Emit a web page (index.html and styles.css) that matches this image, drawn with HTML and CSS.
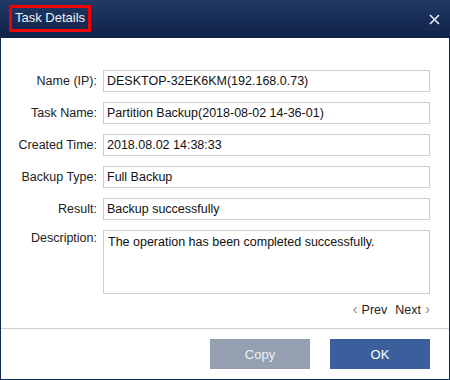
FILE: index.html
```html
<!DOCTYPE html>
<html>
<head>
    <meta name="viewport" content="width=device-width, initial-scale=1.0">
<link rel="stylesheet" href="styles.css">
</head>
<body>

<div class='dialog'>
  <div class='titlebar'>
    <span class='title'>Task Details</span>
    <svg class='close' width="11" height="11" viewBox="0 0 11 11"><path d="M1 1L10 10M10 1L1 10" stroke="#e4e9f2" stroke-width="1.6" fill="none"/></svg>
  </div>

  <div class='content'>
    <div class='form'>
      <div class='label'>Name (IP):</div>
      <div class='field'>DESKTOP-32EK6KM(192.168.0.73)</div>

      <div class='label'>Task Name:</div>
      <div class='field'>Partition Backup(2018-08-02 14-36-01)</div>

      <div class='label'>Created Time:</div>
      <div class='field'>2018.08.02 14:38:33</div>

      <div class='label'>Backup Type:</div>
      <div class='field'>Full Backup</div>

      <div class='label'>Result:</div>
      <div class='field'>Backup successfully</div>

      <div class='label top'>Description:</div>
      <div class='field area'>The operation has been completed successfully.</div>
    </div>

    <div class='pager'>
      <span class='chev'>&lsaquo;</span><span>Prev</span>
      <span class='next'>Next</span><span class='chev'>&rsaquo;</span>
    </div>
  </div>

  <div class='footer'>
    <button class='btn copy'>Copy</button>
    <button class='btn ok'>OK</button>
  </div>
</div>

</body>
</html>
```

FILE: styles.css
```css
* {box-sizing: border-box;}
body {margin: 0; background: #fff; font-family: "Liberation Sans", Arial, sans-serif; font-size: 12.5px;}

.dialog {width: 450px; height: 380px; border: 1px solid #132a50; border-top: 0; display: flex; flex-direction: column; background: #fff;}

.titlebar {height: 38px; margin: 0 -1px; background: linear-gradient(#213a66, #0f2148); display: flex; align-items: center; justify-content: space-between; padding: 0 10px 0 9px;}
.title {color: #eef2f8; font-size: 13px; border: 3px solid #f00000; padding: 3px 3px 4px 3px; margin-top: -1px; line-height: 14px;}
.close {margin-top: 1px;}

.content {flex: 1; padding: 32px 19px 0 0;}
.form {display: grid; grid-template-columns: 96px 327px; column-gap: 6px; row-gap: 10px;}
.label {color: #222; text-align: right; line-height: 22px; white-space: nowrap;}
.label.top {line-height: 16px;}
.field {height: 22px; border: 1px solid #cdcdcd; line-height: 20px; padding-left: 3px; color: #111; white-space: nowrap;}
.field.area {height: 64px; padding-top: 4px; line-height: 15px; padding-left: 4px;}

.pager {display: flex; justify-content: flex-end; align-items: center; margin-top: 9px; color: #222; height: 14px; line-height: 14px;}
.chev {color: #8a8a8a; font-size: 15px; margin: 0 4px; position: relative; top: -1px;}
.chev:last-child {margin-right: 0; margin-left: 4px;}
.next {margin-left: 8px;}

.footer {height: 51px; border-top: 1px solid #cfcfcf; display: flex; justify-content: flex-end; align-items: flex-start; padding: 10px 19px 0 0; gap: 20px;}
.btn {width: 100px; height: 30px; border: 0; font-family: "Liberation Sans", Arial, sans-serif; font-size: 13px; color: #fff;}
.copy {background: #949fb0; color: #eef1f6;}
.ok {background: #3a5f9c;}
```
